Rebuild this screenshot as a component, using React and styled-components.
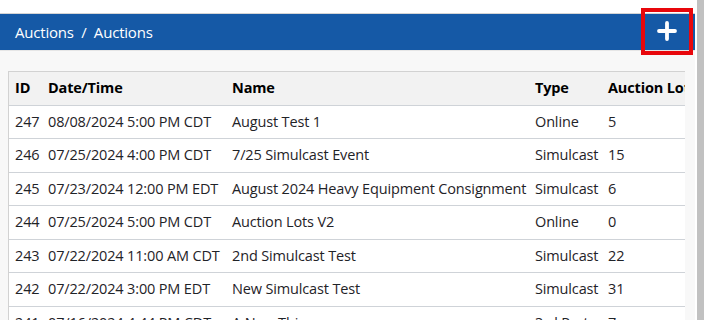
import React from "react";
import styled, { createGlobalStyle } from "styled-components";

const GlobalStyle = createGlobalStyle`
  html, body { margin: 0; padding: 0; background: #ffffff; }
  body { font-family: "Open Sans", "Noto Sans", sans-serif; }
`;

const Page = styled.div`
  display: flex;
  width: 704px;
  height: 320px;
  overflow: hidden;
`;

const Main = styled.div`
  flex: 1;
  display: flex;
  flex-direction: column;
  min-width: 0;
`;

const TopStrip = styled.div`
  flex-shrink: 0;
  height: 13px;
  background: #ffffff;
  border-bottom: 1px solid #d4d4d4;
`;

const Header = styled.div`
  flex-shrink: 0;
  position: relative;
  height: 36px;
  background: #1559a6;
  display: flex;
  align-items: center;
  justify-content: space-between;
  padding: 0 0 0 15px;
  border-bottom: 1px solid #e6e6e6;
`;

const Crumbs = styled.div`
  color: #ffffff;
  font-size: 15px;
  letter-spacing: -0.2px;
  padding-bottom: 1px;
`;

const AddButton = styled.button`
  width: 44px;
  height: 36px;
  border: none;
  background: transparent;
  display: flex;
  align-items: center;
  justify-content: center;
  padding: 0 0 3px 0;
  margin-right: 6px;
`;

const Highlight = styled.div`
  position: absolute;
  right: 2px;
  top: -6px;
  width: 52px;
  height: 47px;
  box-sizing: border-box;
  border: 4px solid #e8070c;
  pointer-events: none;
`;

const Content = styled.div`
  flex: 1;
  min-height: 0;
  background: #f8f8f8;
  padding: 20px 10px 0 8px;
`;

const TableWrap = styled.div`
  overflow: hidden;
  border-left: 1px solid #d2d2d2;
  border-top: 1px solid #d2d2d2;
  background: #ffffff;
  height: 100%;
`;

const Table = styled.table`
  border-collapse: collapse;
  table-layout: fixed;
  width: 760px;
  font-size: 14.5px;
  letter-spacing: -0.15px;
`;

const Th = styled.th`
  box-sizing: border-box;
  text-align: left;
  font-weight: 700;
  color: #000000;
  background: #f2f2f2;
  padding: 6px 7px 6px 6px;
  line-height: 20.5px;
  white-space: nowrap;
  overflow: hidden;
  width: ${(p) => p.$w}px;
  border-bottom: 1px solid #cfd3d8;
`;

const Td = styled.td`
  color: #1f2328;
  padding: 6px 7px 6px 6px;
  line-height: 20.5px;
  white-space: nowrap;
  overflow: hidden;
  border-bottom: 1px solid #cfd3d8;
`;

const Scrollbar = styled.div`
  width: 9px;
  background: #ffffff;
  display: flex;
  justify-content: flex-end;
`;

const Thumb = styled.div`
  width: 7px;
  height: 100%;
  background: #c1c1c1;
`;

const PlusIcon = () => (
  <svg width="20" height="20" viewBox="0 0 20 20">
    <path d="M10 2v16M2 10h16" stroke="#ffffff" strokeWidth="3.8" strokeLinecap="round" />
  </svg>
);

const rows = [
  ["247", "08/08/2024 5:00 PM CDT", "August Test 1", "Online", "5"],
  ["246", "07/25/2024 4:00 PM CDT", "7/25 Simulcast Event", "Simulcast", "15"],
  ["245", "07/23/2024 12:00 PM EDT", "August 2024 Heavy Equipment Consignment", "Simulcast", "6"],
  ["244", "07/25/2024 5:00 PM CDT", "Auction Lots V2", "Online", "0"],
  ["243", "07/22/2024 11:00 AM CDT", "2nd Simulcast Test", "Simulcast", "22"],
  ["242", "07/22/2024 3:00 PM EDT", "New Simulcast Test", "Simulcast", "31"],
  ["241", "07/16/2024 4:44 PM CDT", "A New Thing", "3rd Party", "7"],
];

const cols = [
  ["ID", 33],
  ["Date/Time", 184],
  ["Name", 303],
  ["Type", 73],
  ["Auction Lots", 167],
];

export default function App() {
  return (
    <>
      <GlobalStyle />
      <Page>
        <Main>
          <TopStrip />
          <Header>
            <Crumbs>Auctions&nbsp; /&nbsp; Auctions</Crumbs>
            <AddButton aria-label="Add">
              <PlusIcon />
            </AddButton>
            <Highlight />
          </Header>
          <Content>
            <TableWrap>
              <Table>
                <thead>
                  <tr>
                    {cols.map(([c, w]) => (
                      <Th key={c} $w={w}>{c}</Th>
                    ))}
                  </tr>
                </thead>
                <tbody>
                  {rows.map((r) => (
                    <tr key={r[0]}>
                      {r.map((v, i) => (
                        <Td key={i}>{v}</Td>
                      ))}
                    </tr>
                  ))}
                </tbody>
              </Table>
            </TableWrap>
          </Content>
        </Main>
        <Scrollbar>
          <Thumb />
        </Scrollbar>
      </Page>
    </>
  );
}
